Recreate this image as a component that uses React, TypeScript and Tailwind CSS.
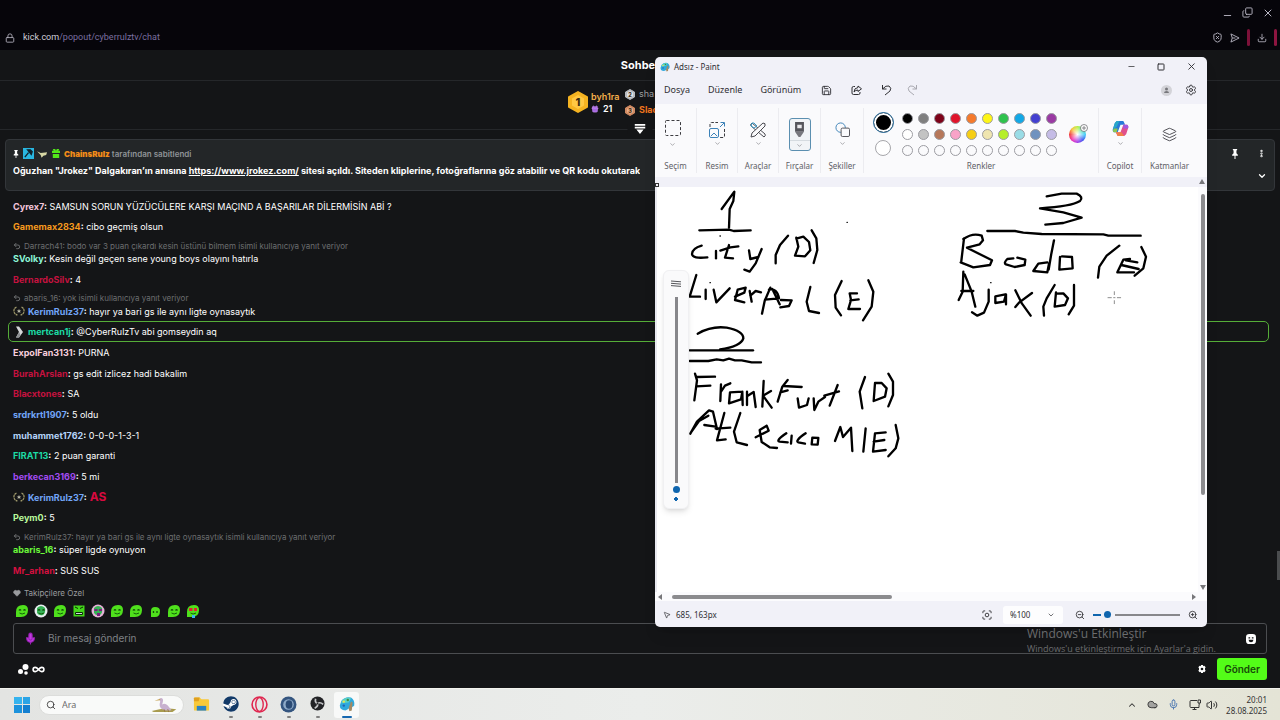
import type { ReactNode } from "react";
import {
  ChevronDown,
  ChevronUp,
  Cloud,
  Copy,
  Download,
  EllipsisVertical,
  Gift,
  Heart,
  Infinity as InfinityIcon,
  Layers,
  Lock,
  Mic,
  Minus,
  MousePointer2,
  Save,
  Search,
  Settings,
  ShieldX,
  Square,
  Undo2,
  Volume2,
  X,
  ZoomIn,
  ZoomOut,
} from "lucide-react";
import { FaSteam } from "react-icons/fa";

interface ChatMessage {
  user: string;
  color: string;
  text: string;
  reply?: string;
  badge?: "laurel" | "chevron";
  highlight?: boolean;
  emote?: string;
}

const messages: ChatMessage[] = [
  { user: "Cyrex7", color: "text-[#f5c6dc]", text: "SAMSUN SORUN YÜZÜCÜLERE KARŞI MAÇIND A BAŞARILAR DİLERMİSİN ABİ ?" },
  { user: "Gamemax2834", color: "text-[#f79a1e]", text: "cibo geçmiş olsun" },
  {
    user: "SVolky",
    color: "text-[#8df5d8]",
    text: "Kesin değil geçen sene young boys olayını hatırla",
    reply: "Darrach41: bodo var 3 puan çıkardı kesin üstünü bilmem isimli kullanıcıya yanıt veriyor",
  },
  { user: "BernardoSilv", color: "text-[#c4123f]", text: "4" },
  {
    user: "KerimRulz37",
    color: "text-[#72a5f8]",
    text: "hayır ya bari gs ile aynı ligte oynasaytık",
    reply: "abaris_16: yok isimli kullanıcıya yanıt veriyor",
    badge: "laurel",
  },
  { user: "mertcan1j", color: "text-[#1cdba5]", text: "@CyberRulzTv abi gomseydin aq", badge: "chevron", highlight: true },
  { user: "ExpolFan3131", color: "text-[#f8cfdd]", text: "PURNA" },
  { user: "BurahArslan", color: "text-[#c4123f]", text: "gs edit izlicez hadi bakalim" },
  { user: "Blacxtones", color: "text-[#c4123f]", text: "SA" },
  { user: "srdrkrtl1907", color: "text-[#72a5f8]", text: "5 oldu" },
  { user: "muhammet1762", color: "text-[#b4d3f9]", text: "0-0-0-1-3-1" },
  { user: "FIRAT13", color: "text-[#1cdba5]", text: "2 puan garanti" },
  { user: "berkecan3169", color: "text-[#a24bf0]", text: "5 mi" },
  { user: "KerimRulz37", color: "text-[#72a5f8]", text: "", badge: "laurel", emote: "AS" },
  { user: "Peym0", color: "text-[#b9f99c]", text: "5" },
  {
    user: "abaris_16",
    color: "text-[#6bf73a]",
    text: "süper ligde oynuyon",
    reply: "KerimRulz37: hayır ya bari gs ile aynı ligte oynasaytık isimli kullanıcıya yanıt veriyor",
  },
  { user: "Mr_arhan", color: "text-[#d3103f]", text: "SUS SUS" },
];

const palette = [
  "bg-black", "bg-[#7f7f7f]", "bg-[#7d0219]", "bg-[#e0142b]", "bg-[#f57a2c]", "bg-[#fdf517]", "bg-[#2fc24d]", "bg-[#12a8e6]", "bg-[#4340d0]", "bg-[#9a3aa3]",
  "bg-white", "bg-[#c3c3c3]", "bg-[#b6775a]", "bg-[#f8a3c8]", "bg-[#f6ce15]", "bg-[#efe5b0]", "bg-[#b5ee2a]", "bg-[#99dce6]", "bg-[#7092bf]", "bg-[#c5bce6]",
];

const LaurelBadge = () => (
  <svg viewBox="0 0 24 20" className="h-[10px] w-[12px] shrink-0" fill="none" stroke="#a09a6b" strokeWidth="2.5">
    <path d="M7 2Q1 5 2 11q1 6 7 7M17 2q6 3 5 9-1 6-7 7" strokeDasharray="5 1" />
    <path d="m12 6 1.500 3h3l-2.500 2 1 3-3-2-3 2 1-3-2.500-2h3z" fill="#b9b9a8" stroke="none" />
  </svg>
);

const ChevronBadge = () => (
  <svg viewBox="0 0 16 24" className="mx-px h-[12px] w-[9px] shrink-0">
    <path d="M1 1h6l8 11-8 11H1l6-11z" fill="#d5d7d9" />
    <path d="m1 23 6-11 3 6-3 5z" fill="#8d9093" />
  </svg>
);

const ChatRow = ({ message }: { message: ChatMessage }) => (
  <div className="px-[5px]">
    {message.reply && (
      <div className="flex h-[11px] items-center gap-[3px] text-[8px] text-[#6c6e70]">
        <Undo2 className="size-[8px]" strokeWidth={3} />
        <span>{message.reply}</span>
      </div>
    )}
    <div className="flex h-[15px] items-center gap-[3px] text-[9px] text-white">
      {message.badge === "laurel" && <LaurelBadge />}
      {message.badge === "chevron" && <ChevronBadge />}
      <p>
        <span className={`font-bold ${message.color}`}>{message.user}</span>
        <span className="font-bold">:</span> {message.text}
      </p>
      {message.emote && <span className="text-[12px] leading-none font-bold text-[#d8093f]">{message.emote}</span>}
    </div>
  </div>
);

const BrowserBar = () => (
  <header className="flex h-[50px] flex-col bg-[#06050a] text-[#b9b7c4]">
    <div className="flex h-[25px] items-center justify-end gap-[9px] pr-[6px]">
      <button aria-label="Simge durumuna küçült"><Minus className="mt-[6px] size-[11px]" /></button>
      <button aria-label="Geri yükle"><Copy className="size-[11px] -scale-x-100 rotate-180" /></button>
      <button aria-label="Kapat"><X className="size-[12px]" /></button>
    </div>
    <div className="flex h-[25px] items-center justify-between pr-[3px] pl-[5px]">
      <div className="flex items-center gap-[8px] font-[Roboto,sans-serif] text-[9px]">
        <Lock className="size-[10px]" />
        <a href="#chat" className="text-[#7b6fa0]"><span className="text-[#d0ced8]">kick.com</span>/popout/cyberrulztv/chat</a>
      </div>
      <div className="flex items-center gap-[7px]">
        <button aria-label="Engelleyici"><ShieldX className="size-[11px]" /></button>
        <button aria-label="Gönder">
          <svg viewBox="0 0 11 11" className="size-[10px]" fill="none" stroke="currentColor" strokeLinejoin="round">
            <path d="M1 1l9 4.500L1 10l1.500-4.500zM2.500 5.500H6" />
          </svg>
        </button>
        <span className="h-[17px] w-[3px] rounded bg-[#7d1139]" />
        <button aria-label="İndirilenler"><Download className="size-[10px]" /></button>
        <span className="h-[17px] w-[3px] rounded bg-[#8d1540]" />
      </div>
    </div>
  </header>
);

const Hexagon = ({ label, outer, inner, className }: { label: string; outer: string; inner: string; className: string }) => (
  <svg viewBox="0 0 20 22" className={className}>
    <path d="M10 1 19 6v10l-9 5-9-5V6z" fill={outer} stroke={outer} strokeWidth="2" strokeLinejoin="round" />
    <path d="m10 4 6 3.500v7L10 18l-6-3.500v-7z" fill={inner} />
    <text x="10" y="15" textAnchor="middle" fontSize="11" fontWeight="800" fill="#3d2b12">{label}</text>
  </svg>
);

const Leaderboard = () => (
  <div className="relative flex h-[49px] justify-center border-b border-[#25272a] pt-[7px]">
    <div className="flex gap-[3px] pt-[3px]">
      <Hexagon label="1" outer="#f5b321" inner="#ffc843" className="h-[22px] w-[20px]" />
      <div className="w-[34px] text-[9px] leading-[12px] font-semibold">
        <div className="text-[#f5b04c]">byh1ra</div>
        <div className="flex items-center gap-[4px] text-white">
          <Gift className="size-[8px] fill-[#a566e0] text-[#c48af5]" />
          21
        </div>
      </div>
    </div>
    <div className="flex w-[87px] flex-col gap-[4px] text-[9px] leading-[12px]">
      <div className="flex items-center gap-[4px] text-[#9b9da0]">
        <Hexagon label="2" outer="#b9bcc0" inner="#dfe1e3" className="h-[11px] w-[10px]" />
        sha
      </div>
      <div className="flex items-center gap-[4px] font-bold text-[#f0741d]">
        <Hexagon label="3" outer="#cf8a63" inner="#e8ab86" className="h-[11px] w-[10px]" />
        Slac
      </div>
    </div>
    <button aria-label="Daralt" className="absolute -bottom-[5px] left-1/2 -translate-x-1/2 bg-[#141517] px-[7px]">
      <svg viewBox="0 0 12 11" className="h-[10px] w-[11px]" fill="#fff">
        <path d="M0 0h12v2H0zM0 3h12v2H0zM2 6h8l-4 5z" />
      </svg>
    </button>
  </div>
);

const PinIcon = ({ className }: { className: string }) => (
  <svg viewBox="0 0 10 14" className={className} fill="#fff">
    <path d="M2 0h6v1.500L7 2v4l2 2v1.500H5.700V14H4.300V9.500H1V8l2-2V2l-1-.5z" />
  </svg>
);

const PinnedMessage = () => (
  <section className="mx-[5px] mt-[9px] flex h-[52px] justify-between rounded-sm border border-[#33363a] bg-[#232628] px-[7px]">
    <div className="min-w-0">
      <div className="mt-[6px] flex h-[15px] items-center gap-[3px] text-[8px] font-semibold text-[#8f9397]">
        <PinIcon className="h-[8px] w-[6px]" />
        <svg viewBox="0 0 12 12" className="ml-px size-[11px]">
          <path fill="#29b6e0" d="M0 0h12v12H0z" />
          <path d="m2 10 4-5M5 2l4 5 1-3-2-2z" stroke="#10242e" strokeWidth="1.500" fill="#10242e" />
        </svg>
        <svg viewBox="0 0 12 8" className="h-[8px] w-[11px]">
          <path d="m0 1 4 2 7-1-1 3-3 1-2 2-1-3z" fill="#d6d7a4" />
        </svg>
        <svg viewBox="0 0 10 11" className="mr-px ml-px h-[9px] w-[8px]" fill="#53e61a">
          <path d="M0 2h2L1 0h3l1 2 1-2h3L8 2h2v3H0zM1 6h8v5H1z" />
        </svg>
        <span><b className="text-[#f28c18]">ChainsRulz</b> tarafından sabitlendi</span>
      </div>
      <p className="mt-[3px] truncate text-[9px] leading-[14px] font-bold text-white">
        Oğuzhan "Jrokez" Dalgakıran’ın anısına{" "}
        <a href="https://www.jrokez.com/" className="underline">https://www.jrokez.com/</a>{" "}
        sitesi açıldı. Siteden kliplerine, fotoğraflarına göz atabilir ve QR kodu okutarak
      </p>
    </div>
    <div className="grid grid-cols-2 gap-x-[16px] pt-[6px] text-white">
      <button aria-label="Sabitle" className="h-[15px]"><PinIcon className="h-[10px] w-[8px]" /></button>
      <button aria-label="Diğer" className="h-[15px]"><EllipsisVertical className="size-[9px]" strokeWidth={4} /></button>
      <button aria-label="Genişlet" className="col-start-2 h-[15px]"><ChevronDown className="size-[10px]" strokeWidth={3} /></button>
    </div>
  </section>
);

const Emote = ({ variant }: { variant: number }) => {
  const small = variant === 7;
  const ringed = variant === 1 || variant === 4;
  return (
    <svg viewBox="0 0 14 14" className="size-[14px]">
      {ringed && <circle cx="7" cy="7" r="6.500" fill={variant === 4 ? "#e7b3d8" : "#e8eef0"} />}
      {variant === 3 && <path d="M1.500 1.500h11v11h-11z" fill="#43d81a" />}
      {ringed && <path d="M3 4q4-4 8 0 1 5-2 7-4 1-6-2z" fill="#36b357" />}
      {small && <path d="M3 7q0-4 4-4 5 0 5 4 0 6-5 6H3z" fill="#4fe01c" />}
      {!small && !ringed && variant !== 3 && <path d="M1 8q0-7 7-7 5 0 5 5 0 7-7 7H1z" fill="#4fe01c" />}
      {variant === 3 && <path d="M3 3l3 1.500M11 3 8 4.500M3.500 8.500h7v2h-7z" stroke="#0f2a05" fill="#ccdddd" />}
      {variant === 4 && <path d="M3.500 5h3v2h-3zM8 5h3v2H8zM6 9h3v3H6z" fill="#7a1f7c" />}
      {variant === 9 && <path d="M3 4h3.500v3H3zM8 4h3v3H8z" fill="#e02332" />}
      {variant !== 3 && variant !== 4 && variant !== 9 && (
        <path d={small ? "M5.500 7v2M9 7v2" : "M4 6.500q1-1.500 2 0M8.500 6.500q1-1.500 2 0"} stroke="#12500a" strokeWidth="1.300" fill="none" />
      )}
      {!small && variant !== 3 && variant !== 4 && <path d="M4.500 9Q7 11 10 9" stroke="#12600a" fill="none" />}
      {variant === 9 && <path d="M6 11h3v3H6z" fill="#3bb6ee" />}
    </svg>
  );
};

const KickChat = () => (
  <main id="chat" className="relative flex flex-1 flex-col bg-[#141517] font-[Inter,sans-serif]">
    <h1 className="h-[31px] border-b border-[#25272a] text-center text-[11px] leading-[30px] font-bold text-white">Sohbet</h1>
    <Leaderboard />
    <PinnedMessage />
    <div className="mr-[11px] ml-[8px] mt-[8px] flex flex-1 flex-col justify-between">
      {messages.map((message, index) =>
        message.highlight ? (
          <div key={index} className="-my-[3px] rounded-[5px] border border-[#55ad38] py-[2px]">
            <ChatRow message={message} />
          </div>
        ) : (
          <ChatRow key={index} message={message} />
        )
      )}
    </div>
    <div className="mx-[13px] mt-[9px] flex h-[12px] items-center gap-[3px] text-[8px] text-[#9a9c9f]">
      <Heart className="size-[8px] fill-current" />
      Takipçilere Özel
    </div>
    <div className="mx-[15px] mt-[5px] flex gap-[5px]">
      {Array.from({ length: 10 }, (_, i) => (
        <button key={i} aria-label={`İfade ${i + 1}`}><Emote variant={i} /></button>
      ))}
    </div>
    <div className="mx-[13px] mt-[5px] flex h-[31px] items-center gap-[11px] rounded-[3px] border border-[#4b4d50] px-[10px]">
      <Mic className="size-[13px] fill-[#c03be0] text-[#9a1fb5]" />
      <input
        aria-label="Mesaj"
        placeholder="Bir mesaj gönderin"
        className="min-w-0 flex-1 bg-transparent text-[10px] text-white outline-none placeholder:text-[#7f8286]"
      />
      <button aria-label="İfadeler">
        <svg viewBox="0 0 12 12" className="size-[10px]">
          <rect width="12" height="12" rx="4" fill="#fff" />
          <path d="M3 4h2v1.500H3zM7 4h2v1.500H7zM3 7h6q-.5 3-3 3T3 7" fill="#141517" />
        </svg>
      </button>
    </div>
    <div className="flex h-[34px] items-center gap-[3px] pr-[13px] pb-[4px] pl-[18px] text-white">
      <svg viewBox="0 0 11 11" className="size-[11px]" fill="#fff">
        <circle cx="7.500" cy="3" r="3" />
        <circle cx="2.500" cy="7.500" r="2.500" />
        <circle cx="8" cy="9" r="1.800" />
      </svg>
      <InfinityIcon className="size-[13px]" strokeWidth={3} />
      <button aria-label="Sohbet ayarları" className="mr-[8px] ml-auto">
        <svg viewBox="0 0 12 12" className="size-[8px]" fill="#fff" fillRule="evenodd">
          <path d="M4.500 0h3l.4 1.700L9.500 1l2 2.500L10.500 5v2l1 1.500-2 2.500-1.600-.7L7.500 12h-3l-.4-1.700-1.600.7-2-2.500L1.500 7V5L.5 3.500 2.500 1l1.600.7zM6 4a2 2 0 1 0 0 4 2 2 0 0 0 0-4" />
        </svg>
      </button>
      <button className="h-[22px] rounded-[3px] bg-[#53fc18] px-[7px] text-[10px] font-semibold text-[#174a08]">Gönder</button>
    </div>
    <span className="absolute right-0 bottom-[108px] h-[29px] w-[3px] bg-[#4a4c4e]" />
  </main>
);

const RibbonGroup = ({ label, children, className = "" }: { label: string; children: ReactNode; className?: string }) => (
  <div className={`my-[4px] flex flex-col items-center justify-between pb-px ${className}`}>
    <div className="flex flex-1 flex-col items-center justify-center">{children}</div>
    <span className="text-[8px] leading-[12px] text-[#606066]">{label}</span>
  </div>
);

const Caret = () => <ChevronDown className="size-[7px] text-[#77777c]" />;

const PaintLogo = ({ className }: { className: string }) => (
  <svg viewBox="0 0 20 20" className={className}>
    <path d="M3 6Q8 0 15 2q5 3 4 10-2 3-5 1-2 4-6 5-7 0-7-6z" fill="#2fa9dd" />
    <path d="M4 5q6-5 11-2l-3 5-9 1z" fill="#59d2c5" />
    <circle cx="6" cy="7" r="1.500" fill="#e8e54f" />
    <circle cx="11" cy="5" r="1.500" fill="#3f8d4a" />
    <circle cx="6" cy="12" r="1.500" fill="#2361b5" />
    <path d="m15 7-3 8 1 4 3-1 1-10z" fill="#a38962" />
  </svg>
);

const Ribbon = () => (
  <div className="flex h-[73px] divide-x divide-[#ececf0] bg-[#fafafc]">
    <RibbonGroup label="Seçim" className="w-[42px]">
      <button aria-label="Seçim aracı" className="flex -translate-x-[3px] flex-col items-center gap-[5px]">
        <svg viewBox="0 0 16 16" className="size-[16px]" fill="none" stroke="#3c3c40">
          <rect x=".5" y=".5" width="15" height="15" rx="1" strokeDasharray="3 2" />
        </svg>
        <Caret />
      </button>
    </RibbonGroup>
    <RibbonGroup label="Resim" className="w-[41px]">
      <button aria-label="Resim araçları" className="flex flex-col items-center gap-[2px]">
        <svg viewBox="0 0 16 16" className="size-[16px]" fill="none" stroke="#3c3c40">
          <path d="M1 5V2q0-1.500 1.500-1.500H9M15.500 7v7q0 1.500-1.500 1.500h-3" strokeDasharray="3 1.500" />
          <rect x=".5" y="6.500" width="9" height="9" rx="1.500" stroke="#3c82b8" />
          <path d="m2 14 3-3 3 3M11 5l4-4M11.500.5h4v4" stroke="#3c82b8" />
        </svg>
        <Caret />
      </button>
    </RibbonGroup>
    <RibbonGroup label="Araçlar" className="w-[41px]">
      <button aria-label="Araçlar" className="flex flex-col items-center gap-[2px]">
        <svg viewBox="0 0 16 16" className="size-[16px]" fill="none" stroke="#4a4a50">
          <path d="m2 1 13 11q1 2-1 3L1 4Q0 2 2 1z" />
          <path d="M13 1q3 0 2 3L5 14l-4 1 1-4z" fill="#fafafc" />
          <path d="M2 1 1 4l3 2 3-2-3-3z" stroke="#3c9ac8" />
        </svg>
        <Caret />
      </button>
    </RibbonGroup>
    <RibbonGroup label="Fırçalar" className="w-[42px]">
      <button aria-label="Fırçalar" aria-pressed="true" className="flex h-[33px] w-[22px] flex-col items-center justify-between rounded-[3px] border border-[#5b8fb0] bg-[#f1f4f7] pt-[3px]">
        <svg viewBox="0 0 12 18" className="h-[16px] w-[11px]">
          <path d="M1 0h10v11H1z" fill="#55565c" />
          <path d="M3.500 3h5v4h-5z" fill="#e9e9ec" />
          <path d="M1 11h10l-4 6H5z" fill="#77787e" />
        </svg>
        <span className="flex h-[10px] w-full items-center justify-center border-t border-[#d5dbe0]"><Caret /></span>
      </button>
    </RibbonGroup>
    <RibbonGroup label="Şekiller" className="w-[43px]">
      <button aria-label="Şekiller" className="flex flex-col items-center gap-[3px]">
        <svg viewBox="0 0 16 16" className="size-[15px]" fill="#fafafc">
          <circle cx="6" cy="6" r="5" stroke="#3c82b8" />
          <rect x="6.500" y="6.500" width="9" height="9" rx="1.500" stroke="#4a4a50" />
        </svg>
        <Caret />
      </button>
    </RibbonGroup>
    <RibbonGroup label="Renkler" className="flex-1">
      <div className="mr-[4px] flex items-center gap-[8px]">
        <div className="flex flex-col items-center gap-[7px]">
          <button aria-label="Renk 1" className="size-[21px] rounded-full border border-[#2f74a5] bg-black ring-2 ring-white ring-inset" />
          <button aria-label="Renk 2" className="size-[16px] rounded-full border border-[#a6a6aa] bg-white" />
        </div>
        <div className="grid grid-cols-10 gap-[5px]">
          {Array.from({ length: 30 }, (_, i) => (
            <button key={i} aria-label={`Palet ${i + 1}`} className={`size-[11px] rounded-full border border-[#9c9ca2] ${palette[i] ?? "bg-[#fafafc]"}`} />
          ))}
        </div>
        <button aria-label="Renkleri düzenle" className="relative ml-[4px] size-[17px] rounded-full bg-[radial-gradient(circle,white,transparent_70%),conic-gradient(#b4f03c,#3ce0a0,#38c8f8,#3450f0,#a030e8,#f028b0,#f03030,#f8c030,#b4f03c)]">
          <svg viewBox="0 0 8 8" className="absolute -top-[2px] -right-[2px] size-[8px]" stroke="#606066" strokeWidth=".7">
            <circle cx="4" cy="4" r="3.500" fill="#fff" />
            <path d="M4 2v4M2 4h4" />
          </svg>
        </button>
      </div>
    </RibbonGroup>
    <RibbonGroup label="Copilot" className="w-[43px]">
      <button aria-label="Copilot" className="flex flex-col items-center gap-[3px]">
        <svg viewBox="0 0 18 17" className="h-[16px] w-[17px]">
          <path d="M5 0h7l2 4H9L6 12H2Q0 11 1 8l2-6z" fill="#2878d8" />
          <path d="M5 0h3L5 6 1 9l2-7z" fill="#28a8c8" />
          <path d="M2 8h4l-1 4H2Q0 11 2 8z" fill="#8cc850" />
          <path d="M13 16H6l-2-4h5l3-8h4q2 1 1 4l-2 6z" fill="#e0508c" />
          <path d="M12 4h4q2 1 1 4h-5z" fill="#a058e0" />
          <path d="M13 16H6l-2-4h6z" fill="#f08048" />
        </svg>
        <Caret />
      </button>
    </RibbonGroup>
    <RibbonGroup label="Katmanlar" className="w-[65px] pr-[10px]">
      <button aria-label="Katmanlar"><Layers className="size-[15px] text-[#48484e]" strokeWidth={1.5} /></button>
    </RibbonGroup>
  </div>
);

// Pen strokes of the notes, in thirds of a canvas pixel
const leftStrokes = [
  "M200 72 238 20 235 48 224 72 222 128",
  "M133 136 222 134 236 138 287 136",
  "M140 182Q112 190 111 207 112 222 157 217",
  "M183 198v22",
  "M222 180l-12 38 24 2M196 197l30-10 24-3",
  "M282 196l4 26 24-6M320 192l-18 43-18 25-16-6",
  "M399 152l-24 28-13 30v25",
  "M424 158l6 27-10 27 30 2 16-18-4-25-17-16-21 6",
  "M470 136l14 24 3 35-11 39",
  "M124 270l-20 65h31",
  "M152 314v28",
  "M176 314l8 38 40-42",
  "M240 335l28-12 4-15-24 6-8 31 28 7",
  "M284 318l6 32M286 332l16-14 16 4",
  "M346 308l-17 40-8 38M342 314Q366 308 372 340l-42 4M352 312l22 46",
  "M378 345l32 1-8 17-26 4",
  "M466 306l-11 44 7 28 30 6",
  "M560 288l-20 42 2 38 16 23",
  "M606 325l-22 0 4 20-8 27 35 0M586 346l25-3",
  "M640 286l15 34-5 45-26 41",
  "M128 446Q170 422 215 428 265 438 265 460 258 484 195 493",
  "M104 496h190",
  "M104 528h56l25-5 20 3 17-5 18 5h20l30 6h28",
  "M120 566l6 20-8 60M126 576l54-1M124 604l42-2",
  "M198 598l-2 50M198 620l12-18 16-7",
  "M262 620l-37 2-3 33 36-12 4-23 1 40",
  "M276 620v40M276 634l20-13 6 45",
  "M326 588l-4 77M348 618l-24 14 26 36",
  "M398 585l-16 20-14 45M386 603l54 3M376 622l22-6",
  "M428 640l4 28 24-8 5-20",
  "M476 640l2 35 12-25 20-14",
  "M548 600l-24 62M508 632l44-13",
  "M630 576l-16 44 8 50",
  "M660 594l-4 54 34-13 5-25-15-16-20 0",
  "M700 566l14 24v40l-14 34",
  "M106 746l20-36 36-34 12 4 12 52M108 742l24-34 28-16M148 720l34 5",
  "M208 684l-22 82 26-3M182 731l44-3",
  "M256 684l-19 56 8 32 31 8",
  "M302 757l39-20-6-15-21 13 6 36 24 16 22 2",
  "M394 745Q360 768 374 770l24 2",
  "M410 752l-2 24",
  "M452 745Q418 768 430 772l20 4",
  "M472 758l18 1-2 20-18-1z",
  "M540 768l16-42 8 30 24-28 4 70",
  "M632 730l-7 70",
  "M692 742l-32 3-6 55 38-5M656 770l32-5",
  "M722 720l8 40-8 30-22 24",
];

const rightStrokes = [
  "M350 34l45-8h45q22 10 10 22-26 16-120 22l70 12 55 16-55 16-54 5",
  "M172 138h83l25 5 55 4 185 1 15 4h97",
  "M102 160l-8 68M100 162q28-20 55-10l4 14-10 12-38 10 75 38-6 14-50 7-38-15",
  "M250 220l-18 2q-12 12-4 16l26 8 30-6 2-16-24-6",
  "M372 166l-8 40-8 48M352 232l-27 4-15 22 42 4 5-26",
  "M390 216l-2 38 40-4-2-34-30-2",
  "M568 182l-38 30-22 33-4 33",
  "M600 222l-20 2-18 38h50M588 226l34 6M574 240l52 12",
  "M634 186l14 29-8 35-26 22",
  "M100 260l-2 60-12 25M104 268l21 52 11 45M94 318h36",
  "M176 314v36l-14 33-20 9-16-10",
  "M226 328l-30 6v20l26-4 6-22v30",
  "M256 316l20 40 26 36M306 324l-38 28-12 14",
  "M374 300l-24 40-10 25 2 27",
  "M378 322l-4 43 31-5 9-20-14-15-22 1",
  "M432 300v62l-16 26",
];

const Canvas = () => (
  <div className="relative flex-1 border-l-2 border-[#e9e9f0] bg-white">
    <svg viewBox="6 6 1650 1215" preserveAspectRatio="xMinYMin slice" className="absolute inset-0 size-full" fill="none" stroke="#000" strokeWidth="7" strokeLinecap="round" strokeLinejoin="round" role="img" aria-label="Çizim">
      {leftStrokes.map((d) => <path key={d} d={d} />)}
      <path d="M576 112h1M195 153h1M165 293h1" strokeWidth="4" />
      <g transform="translate(825)">
        {rightStrokes.map((d) => <path key={d} d={d} />)}
        <path d="M182 293h1" strokeWidth="4" />
        <path d="M534 338h10M562 338h10M553 320v9M553 347v9M551 338h4" strokeWidth="2" stroke="#555" />
      </g>
    </svg>
    <div className="absolute top-[83px] left-[6px] flex h-[239px] w-[26px] flex-col items-center rounded-[6px] border border-[#f0f0f2] bg-[#fafafb] pt-[9px] shadow-md">
      <svg viewBox="0 0 10 8" className="h-[8px] w-[10px]" fill="none" stroke="#55565a">
        <path d="M0 1l10 .8M0 3.300l10 .8M0 5.600l10 .8" />
      </svg>
      <input
        type="range"
        aria-label="Fırça boyutu"
        defaultValue={4}
        className="mt-[9px] h-[204px] w-[8px] appearance-none bg-[radial-gradient(circle_at_4px_202px,#0f65ae_2px,transparent_2px),linear-gradient(#87878b,#87878b)] bg-size-[100%_100%,3px_186px] bg-position-[0_0,center_top] bg-no-repeat [direction:rtl] [writing-mode:vertical-lr] [&::-webkit-slider-thumb]:size-[7px] [&::-webkit-slider-thumb]:appearance-none [&::-webkit-slider-thumb]:rounded-full [&::-webkit-slider-thumb]:bg-[#0f65ae]"
      />
    </div>
    <div className="absolute top-0 right-0 bottom-0 flex w-[9px] flex-col items-center justify-between bg-[#fbfbfd]">
      <span className="mt-[7px] h-[301px] w-[4px] rounded bg-[#8b8b8e]" />
      <span className="mb-[2px] border-x-[3px] border-t-[5px] border-x-transparent border-t-[#77777a]" />
    </div>
  </div>
);

const PaintWindow = () => (
  <section aria-label="Paint" className="absolute top-[57px] left-[655px] flex h-[570px] w-[552px] flex-col overflow-hidden rounded-[5px] bg-[#f1f1f8] font-['Noto_Sans','Open_Sans',sans-serif] text-[#2f2f33] shadow-lg">
    <div className="flex h-[19px] items-center pr-[10px] pl-[5px] text-[8px]">
      <PaintLogo className="mr-[4px] size-[10px]" />
      <span>Adsız - Paint</span>
      <div className="ml-auto flex items-center gap-[21px]">
        <button aria-label="Küçült"><Minus className="size-[9px]" /></button>
        <button aria-label="Ekranı kapla"><Square className="size-[8px]" strokeWidth={3} /></button>
        <button aria-label="Kapat"><X className="size-[11px]" /></button>
      </div>
    </div>
    <nav className="flex h-[28px] items-center pr-[10px] pl-[9px] text-[9px]">
      <div className="flex gap-[18px]">
        <button>Dosya</button>
        <button>Düzenle</button>
        <button>Görünüm</button>
      </div>
      <div className="ml-[20px] flex items-center gap-[19px]">
        <button aria-label="Kaydet"><Save className="size-[11px]" /></button>
        <button aria-label="Paylaş">
          <svg viewBox="0 0 11 11" className="size-[11px]" fill="none" stroke="currentColor" strokeLinejoin="round">
            <path d="M4 1.500H2.500q-1.500 0-1.500 1.500v5q0 1.500 1.500 1.500h5Q9 9.500 9 8V7" />
            <path d="M7 1l3.500 2.800L7 6.500V5Q4.500 5 3 7q0-4 4-4.500z" />
          </svg>
        </button>
        <button aria-label="Geri al">
          <svg viewBox="0 0 11 12" className="h-[12px] w-[11px]" fill="none" stroke="currentColor"><path d="M1.500 1v4h4M1.500 5Q5 1 8 2q3 2 1 5l-5 4" /></svg>
        </button>
        <button aria-label="Yinele" className="-ml-[4px] text-[#a9a9b0]">
          <svg viewBox="0 0 11 12" className="h-[12px] w-[11px] -scale-x-100" fill="none" stroke="currentColor"><path d="M1.500 1v4h4M1.500 5Q5 1 8 2q3 2 1 5l-5 4" /></svg>
        </button>
      </div>
      <div className="ml-auto flex items-center gap-[13px]">
        <button aria-label="Hesap">
          <svg viewBox="0 0 11 11" className="size-[11px]">
            <circle cx="5.500" cy="5.500" r="5.500" fill="#d3d3d8" />
            <circle cx="5.500" cy="4" r="1.500" fill="#77777c" />
            <path d="M3 8q0-2 2.500-2T8 8z" fill="#77777c" />
          </svg>
        </button>
        <button aria-label="Ayarlar"><Settings className="size-[12px]" strokeWidth={1.8} /></button>
      </div>
    </nav>
    <Ribbon />
    <div className="flex h-[10px] items-end justify-between">
      <span className="size-[4px] border border-[#333]" />
      <span className="mr-[2px] mb-[3px] border-x-[3px] border-b-[5px] border-x-transparent border-b-[#77777a]" />
    </div>
    <Canvas />
    <div className="flex h-[9px] items-center bg-[#fbfbfd] px-[3px]">
      <span className="border-y-[3px] border-r-[4px] border-y-transparent border-r-[#77777a]" />
      <span className="ml-[10px] h-[4px] w-[220px] rounded bg-[#8b8b8e]" />
      <span className="mr-[8px] ml-auto border-y-[3px] border-l-[4px] border-y-transparent border-l-[#77777a]" />
    </div>
    <footer className="flex h-[26px] items-center pt-px pr-[9px] pl-[8px] text-[8px]">
      <MousePointer2 className="mr-[5px] size-[8px]" />
      <span>685, 163px</span>
      <button aria-label="Pencereye sığdır" className="mr-[11px] ml-auto">
        <svg viewBox="0 0 11 11" className="size-[10px]" fill="none" stroke="currentColor">
          <path d="M1 3.500V2q0-1 1-1h1.500M7.500 1H9q1 0 1 1v1.500M10 7.500V9q0 1-1 1H7.500M3.500 10H2q-1 0-1-1V7.500" />
          <circle cx="5.500" cy="5.500" r="2" />
        </svg>
      </button>
      <div className="relative mr-[12px] w-[60px]">
        <select aria-label="Yakınlaştırma" className="h-[18px] w-full appearance-none rounded-[3px] bg-[#fdfdfe] pl-[7px]">
          <option>%100</option>
        </select>
        <ChevronDown className="pointer-events-none absolute top-[5px] right-[8px] size-[8px]" />
      </div>
      <button aria-label="Uzaklaştır"><ZoomOut className="size-[10px]" /></button>
      <input
        type="range"
        aria-label="Yakınlaştırma düzeyi"
        defaultValue={14}
        className="mx-[8px] h-[8px] w-[87px] appearance-none bg-[linear-gradient(90deg,#0f65ae_8px,transparent_8px_22px,#87878b_22px)] bg-size-[100%_2px] bg-center bg-no-repeat [&::-webkit-slider-thumb]:size-[7px] [&::-webkit-slider-thumb]:appearance-none [&::-webkit-slider-thumb]:rounded-full [&::-webkit-slider-thumb]:bg-[#0f65ae]"
      />
      <button aria-label="Yakınlaştır"><ZoomIn className="size-[10px]" /></button>
    </footer>
  </section>
);

const TaskButton = ({ label, children, active, idle }: { label: string; children: ReactNode; active?: boolean; idle?: boolean }) => (
  <button aria-label={label} className={`flex h-[26px] w-[25px] flex-col items-center justify-between rounded-[3px] pt-[4px] ${active ? "bg-[#f8f9f8]" : ""}`}>
    {children}
    {!idle && <span className={`h-[2px] rounded ${active ? "w-[10px] bg-[#1668b0]" : "w-[4px] bg-[#808080]"}`} />}
  </button>
);

const Taskbar = () => (
  <footer className="flex h-[32px] items-center border-t border-[#f3f3ee] bg-linear-to-r from-[#e3e4e2] via-[#ebedeb] to-[#e4e4d6] pr-[13px] pl-[14px] font-['Noto_Sans','Open_Sans',sans-serif] text-[8px] text-[#333]">
    <button aria-label="Başlat" className="grid size-[16px] grid-cols-2 gap-px">
      <span className="bg-[#35b3ee]" />
      <span className="bg-[#2ba4e6]" />
      <span className="bg-[#1c92dc]" />
      <span className="bg-[#147fd0]" />
    </button>
    <label className="mr-[5px] ml-[9px] flex h-[20px] w-[145px] items-center gap-[6px] rounded-full border border-[#dcdddb] bg-[#f9faf9] px-[6px]">
      <Search className="size-[10px] shrink-0" />
      <input aria-label="Ara" placeholder="Ara" className="w-full min-w-0 bg-transparent text-[9px] outline-none placeholder:text-[#6c6c6c]" />
      <svg viewBox="0 0 26 18" className="h-[17px] w-[26px] shrink-0">
        <path d="M0 16q12-4 26-2l-4 3H2z" fill="#a89b4e" />
        <path d="M8 3q3-2 4 1 0 3-1 5 3-2 6 1l4 5q-6 1-10-1-4-3-2-8z" fill="#c7b0cf" />
        <path d="M9 3 3 5l6-.5" fill="#c4a050" />
        <path d="m13 14 1 3M17 14l1 3" stroke="#9a7748" />
      </svg>
    </label>
    <div className="flex gap-[4px]">
      <TaskButton label="Dosya Gezgini" idle>
        <svg viewBox="0 0 18 16" className="h-[16px] w-[17px]">
          <path d="M1 2q0-1 1-1h5l2 2h7q1 0 1 1v10q0 1-1 1H2q-1 0-1-1z" fill="#f8c93a" />
          <path d="M1 2q0-1 1-1h5l-1 4H1z" fill="#e0a020" />
          <path d="M4 10h10v5H4z" fill="#2b83c4" />
        </svg>
      </TaskButton>
      <TaskButton label="Steam">
        <span className="rounded-full bg-white"><FaSteam className="size-[16px] text-[#123a68]" /></span>
      </TaskButton>
      <TaskButton label="Opera GX">
        <svg viewBox="0 0 16 16" className="size-[17px]" fill="none" stroke="#e0264f">
          <circle cx="8" cy="8" r="7" strokeWidth="1.500" />
          <ellipse cx="8" cy="8" rx="3.500" ry="6.500" strokeWidth="1.300" />
        </svg>
      </TaskButton>
      <TaskButton label="Tarayıcı">
        <svg viewBox="0 0 16 16" className="size-[17px]">
          <circle cx="8" cy="8" r="7.500" fill="#34557f" />
          <circle cx="8" cy="8" r="5" fill="#8fabc9" />
          <ellipse cx="8.500" cy="8" rx="3.200" ry="4" fill="#2b4b74" />
        </svg>
      </TaskButton>
      <TaskButton label="OBS Studio">
        <svg viewBox="0 0 16 16" className="size-[15px]">
          <circle cx="8" cy="8" r="7.500" fill="#222326" />
          <path d="M8 8Q5 7 6 3M8 8q3-2 6 1M8 8q1 3-3 5" stroke="#c6c7c9" strokeWidth="1.800" fill="none" />
          <circle cx="8" cy="8" r="1" fill="#222326" />
        </svg>
      </TaskButton>
      <TaskButton label="Paint" active>
        <PaintLogo className="size-[16px]" />
      </TaskButton>
    </div>
    <div className="ml-auto flex items-center gap-[8px]">
      <div className="flex items-center gap-[10px]">
        <button aria-label="Gizli simgeler"><ChevronUp className="size-[10px]" strokeWidth={2.5} /></button>
        <Cloud className="size-[11px] fill-[#a3a3a0]" />
        <Mic className="size-[11px] text-[#3f6fae]" />
        <svg viewBox="0 0 12 12" className="size-[12px]" fill="none" stroke="currentColor">
          <path d="M8 1.500H2q-1 0-1 1v5q0 1 1 1h8V6M3.500 10.500h4M5.500 8.500v2M9 1h2.500v3H9zM10.200 4v2" />
        </svg>
        <Volume2 className="-ml-[5px] size-[12px]" />
      </div>
      <div className="text-right leading-[11px]">
        <div>20:01</div>
        <div>28.08.2025</div>
      </div>
    </div>
  </footer>
);

function App() {
  return (
    <div className="relative flex min-h-screen flex-col overflow-hidden">
      <BrowserBar />
      <KickChat />
      <Taskbar />
      <PaintWindow />
      <div className="pointer-events-none absolute top-[626px] left-[1027px] font-['Open_Sans',sans-serif] whitespace-nowrap text-[#6b6c6e]">
        <p className="text-[12px] leading-[16px]">Windows'u Etkinleştir</p>
        <p className="text-[9px] leading-[14px]">Windows'u etkinleştirmek için Ayarlar'a gidin.</p>
      </div>
    </div>
  );
}

export default App;
